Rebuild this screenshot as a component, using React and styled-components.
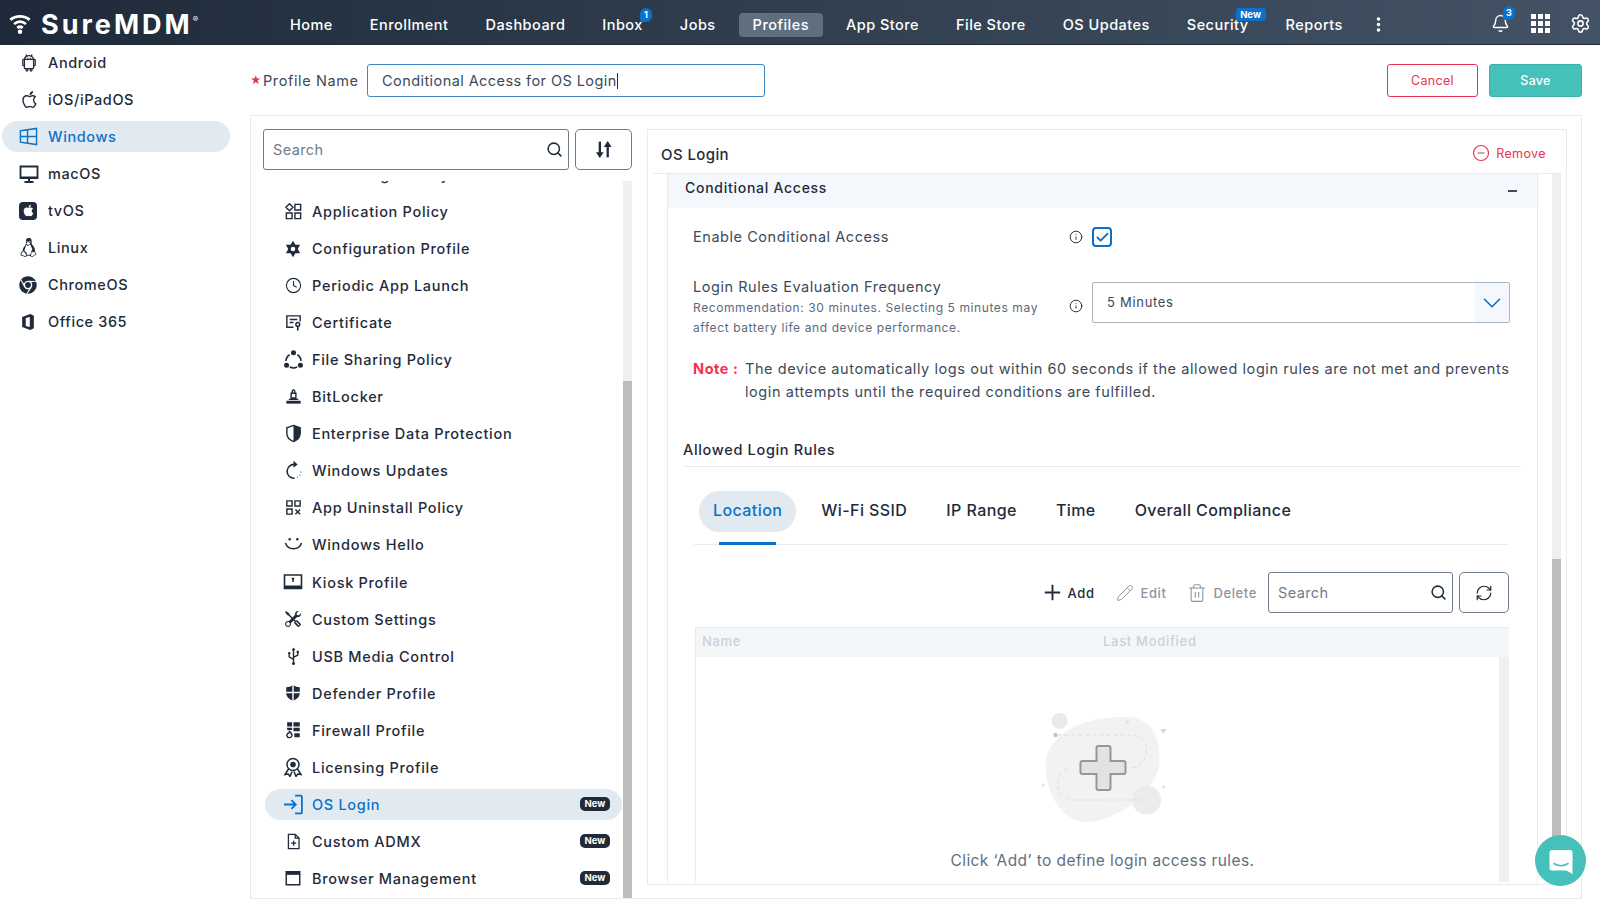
import React from 'react';
import styled, { createGlobalStyle } from 'styled-components';
import { Bell, Settings, EllipsisVertical, Search, RefreshCw, Pencil, Trash2, ChevronDown, CircleMinus, Info, Check, Clock } from 'lucide-react';
import { AiOutlineAndroid, AiOutlineApple } from 'react-icons/ai';
import { FaApple, FaChrome } from 'react-icons/fa';
import { VscTerminalLinux } from 'react-icons/vsc';
import { BsTools } from 'react-icons/bs';

//////////////////////////////////////////////////

const Glyph = styled.svg.attrs({ viewBox: '0 0 20 20' })`
  width: ${p => p.$size || 19}px;
  height: ${p => p.$size || 19}px;
  flex: none;
  fill: none;
  stroke: currentColor;
  stroke-width: 1.5;
`;

const SOLID = { fill: 'currentColor', stroke: 'none' };

const WifiLogo = () => (
  <LogoMark viewBox="0 0 24 24">
    <path d="M1.5 7.5C7.5 2.5 16.5 2.5 22.5 7.5" />
    <path d="M5.5 12C9.5 8.8 14.5 8.8 18.5 12" />
    <path d="M9 16.2C10.8 14.8 13.2 14.8 15 16.2" />
    <circle cx="12" cy="20.5" r="2.4" fill="#fff" stroke="none" />
  </LogoMark>
);

const sideIcons = {
  Android: <AiOutlineAndroid size={20} />,
  'iOS/iPadOS': <AiOutlineApple size={21} />,
  Windows: (
    <Glyph $size={19}>
      <path d="M1.5 4L18.5 1.5V18.5L1.5 16Z M1.5 10H18.5 M9 3V17" />
    </Glyph>
  ),
  macOS: (
    <Glyph $size={20}>
      <path d="M1.5 2.5H18.5V14H1.5Z" strokeWidth="1.8" />
      <path d="M1.5 12.5H18.5V14.5H1.5Z" {...SOLID} />
      <path d="M10 14V17.5 M5.5 18H14.5" strokeWidth="2" />
    </Glyph>
  ),
  tvOS: null,
  Linux: <VscTerminalLinux size={19} />,
  ChromeOS: <FaChrome size={18} />,
  'Office 365': (
    <Glyph $size={18}>
      <path d="M12.5 1L3.5 4.5V15.5L12.5 19L16.5 17V3ZM12 4.5V15.5L7.5 14.5V5.5Z" {...SOLID} fillRule="evenodd" />
    </Glyph>
  ),
};

const listIcons = {
  app: (
    <Glyph>
      <path d="M5.8 1.8L9.5 5.5L5.8 9.2L2 5.5Z M11.5 2.5H17.5V8.5H11.5Z M2.5 11.5H8.5V17.5H2.5Z M11.5 11.5H17.5V17.5H11.5Z" />
    </Glyph>
  ),
  config: (
    <Glyph $size={18}>
      <path d="M10 .8L12.7 5.2H17.9L15.3 10L17.9 14.8H12.7L10 19.2L7.3 14.8H2.1L4.7 10L2.1 5.2H7.3Z" {...SOLID} />
      <circle cx="10" cy="10" r="2.5" fill="#fff" stroke="none" />
    </Glyph>
  ),
  clock: <Clock size={17} strokeWidth={1.6} />,
  cert: (
    <Glyph>
      <path d="M17 9V3H3V15H10 M6 6.8H14 M6 10H10" />
      <circle cx="14.5" cy="12" r="2" />
      <path d="M14.5 14V18.5" strokeWidth="1.8" />
    </Glyph>
  ),
  share: (
    <Glyph $size={21}>
      <circle cx="10" cy="3.6" r="2.4" {...SOLID} />
      <circle cx="3.4" cy="15.5" r="2.4" {...SOLID} />
      <circle cx="16.6" cy="15.5" r="2.4" {...SOLID} />
      <path d="M6.3 5.5A7.5 7.5 0 0 0 2.8 11.5 M13.7 5.5A7.5 7.5 0 0 1 17.2 11.5 M6.5 17.2A8 8 0 0 0 13.5 17.2" />
    </Glyph>
  ),
  lock: (
    <Glyph>
      <path d="M7.5 6.5H12.5V11.5H7.5Z M8.7 6.5V4.5A1.3 1.3 0 0 1 11.3 4.5V6.5 M5 13H15" />
      <path d="M2.5 14.5H17.5V17.5H2.5Z" {...SOLID} />
    </Glyph>
  ),
  edp: (
    <Glyph>
      <path d="M10 1.5L17 4V10C17 14 14 16.9 10 18.5C6 16.9 3 14 3 10V4Z" />
      <path d="M10 1.5L17 4V10C17 14 14 16.9 10 18.5Z" {...SOLID} />
    </Glyph>
  ),
  update: (
    <Glyph $size={21}>
      <path d="M10.5 4.2A6.6 6.6 0 0 0 10.5 17.4" />
      <path d="M10.5 17.4A6.6 6.6 0 0 0 17 10.8" strokeDasharray="1 2" opacity=".55" />
      <path d="M10 .8L14 4.2L10 7.4Z" {...SOLID} />
    </Glyph>
  ),
  uninstall: (
    <Glyph>
      <path d="M3 3H8.5V8.5H3Z M11.5 3H17V8.5H11.5Z M3 11.5H8.5V17H3Z M12 12L17 17 M17 12L12 17" />
    </Glyph>
  ),
  hello: (
    <Glyph>
      <circle cx="6" cy="4.5" r="1.3" {...SOLID} />
      <circle cx="14" cy="4.5" r="1.3" {...SOLID} />
      <path d="M1.5 8.5A9 9 0 0 0 18.5 8.5" strokeWidth="1.6" />
    </Glyph>
  ),
  kiosk: (
    <Glyph $size={20}>
      <path d="M1.5 3H18.5V16.5H1.5Z" strokeWidth="1.6" />
      <path d="M1.5 13.5H18.5V17H1.5Z" {...SOLID} />
      <path d="M8.7 6.5H11.3 M10 6.5V10" strokeWidth="1.5" />
    </Glyph>
  ),
  tools: <BsTools size={16} />,
  usb: (
    <Glyph>
      <path d="M10 3V16.5 M10 13L5.5 10.3V7.5 M10 11L14.5 8.5V6" />
      <path d="M10 .5L12 3.5H8Z" {...SOLID} />
      <circle cx="10" cy="17.3" r="1.6" {...SOLID} />
      <circle cx="5.5" cy="6.5" r="1.3" {...SOLID} />
      <path d="M13.3 4H15.7V6.3H13.3Z" {...SOLID} />
    </Glyph>
  ),
  defender: (
    <Glyph $size={18}>
      <path d="M10 1.5C12.5 3 15 3.5 17.5 3.5V10C17.5 14 14.5 17 10 18.5C5.5 17 2.5 14 2.5 10V3.5C5 3.5 7.5 3 10 1.5Z" {...SOLID} />
      <path d="M10 1.5V18.5 M2.5 9.5H17.5" stroke="#fff" strokeWidth="1.6" />
    </Glyph>
  ),
  firewall: (
    <Glyph $size={18}>
      <path d="M3.5 1.5H9V6H3.5Z M10.5 1.5H17.5V6H10.5Z M10.5 7.5H17.5V11.5H10.5Z M3.5 7.5H9V10H3.5Z M11.5 13.5H17.5V18H11.5Z" {...SOLID} />
      <path d="M6 11.5C8.5 13.5 9.2 15 8.8 16.5A3 3 0 0 1 3 16C3 14.5 4 14.5 4.5 13.5C5.5 14 6 13 6 11.5Z" />
    </Glyph>
  ),
  license: (
    <Glyph $size={20}>
      <circle cx="10" cy="7.5" r="6" />
      <circle cx="10" cy="7.5" r="2.8" {...SOLID} />
      <path d="M5.5 12L2 17.5L5.3 17L7 19.5L9 14.5 M14.5 12L18 17.5L14.7 17L13 19.5L11 14.5" />
    </Glyph>
  ),
  login: (
    <Glyph $size={21}>
      <path d="M11.5 1.5H17A1 1 0 0 1 18 2.5V17.5A1 1 0 0 1 17 18.5H11.5" strokeWidth="1.7" />
      <path d="M1 10H12 M8 5.8L12.2 10L8 14.2" strokeWidth="1.7" />
    </Glyph>
  ),
  admx: (
    <Glyph $size={17}>
      <path d="M4 1.5H12L16.5 6V18.5H4Z M12 1.5V6H16.5 M10.2 9V15 M7.2 12H13.2" />
    </Glyph>
  ),
  browser: (
    <Glyph $size={18}>
      <path d="M2.5 3H17.5V17.5H2.5Z" strokeWidth="1.6" />
      <path d="M2.5 3H17.5V6.5H2.5Z" {...SOLID} />
    </Glyph>
  ),
};

const NAV = [
  { label: 'Home' },
  { label: 'Enrollment' },
  { label: 'Dashboard' },
  { label: 'Inbox', badge: '1' },
  { label: 'Jobs' },
  { label: 'Profiles', active: true },
  { label: 'App Store' },
  { label: 'File Store' },
  { label: 'OS Updates' },
  { label: 'Security', tag: 'New' },
  { label: 'Reports' },
];

const PLATFORMS = ['Android', 'iOS/iPadOS', 'Windows', 'macOS', 'tvOS', 'Linux', 'ChromeOS', 'Office 365'];

const POLICIES = [
  { label: 'Data Usage Policy' },
  { label: 'Application Policy', icon: 'app' },
  { label: 'Configuration Profile', icon: 'config' },
  { label: 'Periodic App Launch', icon: 'clock' },
  { label: 'Certificate', icon: 'cert' },
  { label: 'File Sharing Policy', icon: 'share' },
  { label: 'BitLocker', icon: 'lock' },
  { label: 'Enterprise Data Protection', icon: 'edp' },
  { label: 'Windows Updates', icon: 'update' },
  { label: 'App Uninstall Policy', icon: 'uninstall' },
  { label: 'Windows Hello', icon: 'hello' },
  { label: 'Kiosk Profile', icon: 'kiosk' },
  { label: 'Custom Settings', icon: 'tools' },
  { label: 'USB Media Control', icon: 'usb' },
  { label: 'Defender Profile', icon: 'defender' },
  { label: 'Firewall Profile', icon: 'firewall' },
  { label: 'Licensing Profile', icon: 'license' },
  { label: 'OS Login', icon: 'login', active: true, isNew: true },
  { label: 'Custom ADMX', icon: 'admx', isNew: true },
  { label: 'Browser Management', icon: 'browser', isNew: true },
];

const TABS = ['Location', 'Wi-Fi SSID', 'IP Range', 'Time', 'Overall Compliance'];

const App = () => (
  <Page>
    <GlobalStyle />
    <TopBar>
      <Logo>
        <WifiLogo />
        <LogoText>SureMDM<sup>®</sup></LogoText>
      </Logo>
      <Nav>
        {NAV.map(item => (
          <NavItem key={item.label} $active={item.active}>
            {item.label}
            {item.badge && <NavBadge>{item.badge}</NavBadge>}
            {item.tag && <NavTag>{item.tag}</NavTag>}
          </NavItem>
        ))}
        <MoreButton><EllipsisVertical size={19} strokeWidth={2.6} /></MoreButton>
      </Nav>
      <TopIcons>
        <TopIcon>
          <Bell size={19} strokeWidth={1.8} />
          <BellBadge>3</BellBadge>
        </TopIcon>
        <TopIcon>
          <AppGrid>{[...Array(9)].map((_, i) => <i key={i} />)}</AppGrid>
        </TopIcon>
        <TopIcon><Settings size={21} strokeWidth={1.8} /></TopIcon>
      </TopIcons>
    </TopBar>

    <Body>
      <Sidebar>
        {PLATFORMS.map(name => (
          <SideItem key={name} $active={name === 'Windows'}>
            <SideIcon>
              {name === 'tvOS' ? <TvBadge><FaApple size={13} /></TvBadge> : sideIcons[name]}
            </SideIcon>
            {name}
          </SideItem>
        ))}
      </Sidebar>

      <Main>
        <ProfileBar>
          <Required>★</Required>
          <NameLabel>Profile Name</NameLabel>
          <NameField>Conditional Access for OS Login</NameField>
          <CancelButton>Cancel</CancelButton>
          <SaveButton>Save</SaveButton>
        </ProfileBar>

        <Panel>
          <ListColumn>
            <SearchRow>
              <SearchBox>
                <SearchInput placeholder="Search" />
                <Search size={17} strokeWidth={2.2} />
              </SearchBox>
              <SquareButton $width={57}>
                <Glyph $size={21}>
                  <path d="M6.5 2.5V15" strokeWidth="2.2" />
                  <path d="M2.8 12.5H10.2L6.5 18Z" {...SOLID} />
                  <path d="M14 17.5V5" strokeWidth="2.2" />
                  <path d="M10.3 7.5H17.7L14 2Z" {...SOLID} />
                </Glyph>
              </SquareButton>
            </SearchRow>
            <ListWrap>
              <PolicyList>
                {POLICIES.map(p => (
                  <PolicyRow key={p.label} $active={p.active}>
                    <PolicyIcon>{listIcons[p.icon]}</PolicyIcon>
                    <PolicyName>{p.label}</PolicyName>
                    {p.isNew && <NewBadge>New</NewBadge>}
                  </PolicyRow>
                ))}
              </PolicyList>
              <ScrollTrack $width={9}>
                <ScrollThumb $top={200} />
              </ScrollTrack>
            </ListWrap>
          </ListColumn>

          <DetailCard>
            <CardHeader>
              <CardTitle>OS Login</CardTitle>
              <RemoveLink>
                <CircleMinus size={18} strokeWidth={1.6} />
                Remove
              </RemoveLink>
            </CardHeader>
            <CardBody>
              <Accordion>
                <AccordionHead>
                  <AccordionTitle>Conditional Access</AccordionTitle>
                  <Collapse />
                </AccordionHead>
                <AccordionContent>
                  <FormBlock>
                    <EnableRow>
                      <FieldLabel>Enable Conditional Access</FieldLabel>
                      <InfoIcon><Info size={16} strokeWidth={1.6} /></InfoIcon>
                      <CheckBox><Check size={15} strokeWidth={3} /></CheckBox>
                    </EnableRow>
                    <FrequencyRow>
                      <FieldText>
                        <FieldLabel>Login Rules Evaluation Frequency</FieldLabel>
                        <FieldHint>Recommendation: 30 minutes. Selecting 5 minutes may affect battery life and device performance.</FieldHint>
                      </FieldText>
                      <InfoIcon $offset={21}><Info size={16} strokeWidth={1.6} /></InfoIcon>
                      <SelectBox>
                        <SelectValue>5 Minutes</SelectValue>
                        <SelectArrow><ChevronDown size={30} strokeWidth={1.3} /></SelectArrow>
                      </SelectBox>
                    </FrequencyRow>
                    <NoteRow>
                      <NoteLabel>Note :</NoteLabel>
                      <NoteText>The device automatically logs out within 60 seconds if the allowed login rules are not met and prevents login attempts until the required conditions are fulfilled.</NoteText>
                    </NoteRow>
                  </FormBlock>

                  <SectionTitle>Allowed Login Rules</SectionTitle>

                  <RulesBlock>
                    <TabBar>
                      {TABS.map(tab => (
                        <Tab key={tab} $active={tab === 'Location'}>{tab}</Tab>
                      ))}
                    </TabBar>
                    <Toolbar>
                      <ActionButton>
                        <Glyph $size={17}><path d="M10 1V19 M1 10H19" strokeWidth="2.2" /></Glyph>
                        Add
                      </ActionButton>
                      <ActionButton $disabled><Pencil size={18} strokeWidth={1.3} />Edit</ActionButton>
                      <ActionButton $disabled><Trash2 size={20} strokeWidth={1.3} />Delete</ActionButton>
                      <SearchBox $width={185}>
                        <SearchInput placeholder="Search" />
                        <Search size={17} strokeWidth={2.2} />
                      </SearchBox>
                      <SquareButton $width={50}><RefreshCw size={18} strokeWidth={1.6} /></SquareButton>
                    </Toolbar>
                    <RulesTable>
                      <TableHead>
                        <HeadCell $width={401}>Name</HeadCell>
                        <HeadCell>Last Modified</HeadCell>
                      </TableHead>
                      <TableBody>
                        <EmptyState>
                          <EmptyArt viewBox="1031.5 710 140 120">
                            <path d="M1044 765C1044 738 1075 716 1125 717C1150 718 1158 735 1158 760C1158 790 1115 822 1085 822C1062 822 1044 795 1044 765Z" fill="#f2f2f2" />
                            <circle cx="1058" cy="721" r="8" fill="#eaeaea" />
                            <circle cx="1145" cy="800" r="14.5" fill="#ececec" />
                            <circle cx="1054" cy="735" r="2.2" fill="#c4c4c4" />
                            <circle cx="1126" cy="722" r="1.4" fill="#dcdcdc" />
                            <circle cx="1162" cy="787" r="1.4" fill="#dcdcdc" />
                            <path d="M1159 729H1165L1162 734Z" fill="#d6d6d6" />
                            <path d="M1043 783V787L1040 785Z" fill="#dcdcdc" />
                            <path d="M1056 735H1130C1150 735 1150 765 1130 768 M1066 769C1052 775 1052 798 1072 800H1143" fill="none" stroke="#dcdcdc" strokeWidth="1" strokeDasharray="4 3" />
                            <path d="M1097 746H1107A2 2 0 0 1 1109 748V761H1122A2 2 0 0 1 1124 763V772A2 2 0 0 1 1122 774H1109V788A2 2 0 0 1 1107 790H1097A2 2 0 0 1 1095 788V774H1081A2 2 0 0 1 1079 772V763A2 2 0 0 1 1081 761H1095V748A2 2 0 0 1 1097 746Z" fill="#e2e2e2" stroke="#969696" strokeWidth="2" />
                          </EmptyArt>
                          <EmptyText>Click ‘Add’ to define login access rules.</EmptyText>
                        </EmptyState>
                        <ScrollTrack $width={10} />
                      </TableBody>
                    </RulesTable>
                  </RulesBlock>
                </AccordionContent>
              </Accordion>
              <ScrollTrack $width={9}>
                <ScrollThumb $top={385} />
              </ScrollTrack>
            </CardBody>
          </DetailCard>
        </Panel>
      </Main>
    </Body>

    <ChatButton>
      <svg width="26" height="26" viewBox="0 0 26 26">
        <path d="M4 1H22A2.5 2.5 0 0 1 24.5 3.5V25L18.5 21.5H4A2.5 2.5 0 0 1 1.5 19V3.5A2.5 2.5 0 0 1 4 1Z" fill="#fff" />
        <path d="M6 14.5C10 17.5 16 17.5 20 14.5" fill="none" stroke="#45c0bb" strokeWidth="1.6" strokeLinecap="round" />
      </svg>
    </ChatButton>
  </Page>
);

//////////////////////////////////////////////////

const GlobalStyle = createGlobalStyle`
  html, body {
    margin: 0;
    padding: 0;
    background: #fff;
  }
  body {
    font-family: Inter, "Open Sans", "Liberation Sans", sans-serif;
    color: #1f2b3a;
  }
`;

const Page = styled.div`
  position: relative;
  width: 1600px;
  height: 900px;
  overflow: hidden;
  display: flex;
  flex-direction: column;
`;

const TopBar = styled.header`
  height: 45px;
  flex: none;
  display: flex;
  align-items: center;
  padding-top: 5px;
  background: linear-gradient(90deg, #1e2a39, #435365);
  border-bottom: 1px solid #1f2b3a;
  box-sizing: border-box;
  color: #fff;
`;

const Logo = styled.div`
  width: 276px;
  flex: none;
  display: flex;
  align-items: center;
  gap: 10px;
  padding-left: 9px;
  margin-top: -1px;
  box-sizing: border-box;
`;

const LogoMark = styled.svg`
  width: 22px;
  height: 22px;
  fill: none;
  stroke: #fff;
  stroke-width: 3;
`;

const LogoText = styled.div`
  font-size: 27px;
  font-weight: 700;
  letter-spacing: 3px;
  sup {
    font-size: 8px;
    font-weight: 400;
    letter-spacing: 0;
    vertical-align: 12px;
    line-height: 0;
  }
`;

const Nav = styled.nav`
  display: flex;
  align-items: center;
  gap: 9px;
`;

const NavItem = styled.a`
  position: relative;
  height: 24px;
  line-height: 24px;
  padding: 0 14px;
  border-radius: 4px;
  font-size: 14.5px;
  font-weight: 500;
  letter-spacing: 0.47px;
  white-space: nowrap;
  background: ${p => (p.$active ? '#5f6f80' : 'transparent')};
`;

const NavBadge = styled.span`
  position: absolute;
  top: -5px;
  right: 5px;
  width: 12px;
  height: 14px;
  border-radius: 6px 6px 6px 2px;
  background: #0a72c9;
  font-size: 9px;
  font-weight: 700;
  line-height: 14px;
  text-align: center;
  letter-spacing: 0;
`;

const NavTag = styled.span`
  position: absolute;
  top: -5px;
  right: -3px;
  width: 30px;
  height: 13px;
  border-radius: 3px;
  background: #0a72c9;
  font-size: 9.5px;
  font-weight: 700;
  line-height: 13px;
  text-align: center;
  letter-spacing: 0;
`;

const MoreButton = styled.span`
  display: flex;
  margin-left: 3px;
`;

const TopIcons = styled.div`
  margin-left: auto;
  margin-top: -2px;
  display: flex;
  align-items: center;
  gap: 20.5px;
  padding-right: 9px;
`;

const TopIcon = styled.span`
  position: relative;
  display: flex;
`;

const BellBadge = styled(NavBadge)`
  top: -8px;
  right: -5px;
`;

const AppGrid = styled.span`
  display: grid;
  grid-template-columns: repeat(3, 5px);
  gap: 2px;
  i {
    width: 5px;
    height: 5px;
    background: #fff;
  }
`;

const Body = styled.div`
  flex: 1;
  min-height: 0;
  display: flex;
`;

const Sidebar = styled.aside`
  width: 250px;
  flex: none;
  box-sizing: border-box;
  padding: 2px 0 0 2px;
  display: flex;
  flex-direction: column;
  gap: 6px;
`;

const SideItem = styled.div`
  width: 228px;
  height: 31px;
  display: flex;
  align-items: center;
  border-radius: 16px;
  font-size: 14.5px;
  font-weight: 500;
  letter-spacing: 0.6px;
  color: ${p => (p.$active ? '#0a72c9' : '#1f2b3a')};
  background: ${p => (p.$active ? '#e2eaf1' : 'transparent')};
`;

const SideIcon = styled.span`
  width: 46px;
  padding-left: 17px;
  box-sizing: border-box;
  flex: none;
  display: flex;
`;

const TvBadge = styled.span`
  width: 18px;
  height: 18px;
  border-radius: 4px;
  background: #1f2b3a;
  color: #fff;
  display: flex;
  align-items: center;
  justify-content: center;
`;

const Main = styled.main`
  flex: 1;
  min-width: 0;
  display: flex;
  flex-direction: column;
  padding-right: 18px;
  padding-bottom: 1px;
`;

const ProfileBar = styled.div`
  height: 70px;
  flex: none;
  box-sizing: border-box;
  padding-top: 19px;
  display: flex;
  align-items: flex-start;
`;

const Required = styled.span`
  color: #e8344e;
  width: 13px;
  font-size: 11px;
  line-height: 33px;
`;

const NameLabel = styled.label`
  width: 104px;
  font-size: 14.5px;
  letter-spacing: 0.6px;
  line-height: 33px;
  color: #3c4a5a;
`;

const NameField = styled.div`
  width: 398px;
  height: 33px;
  box-sizing: border-box;
  border: 1px solid #3f86c5;
  border-radius: 3px;
  padding-left: 14px;
  font-size: 14.5px;
  letter-spacing: 0.43px;
  line-height: 31px;
  color: #3c4a5a;
  &::after {
    content: '';
    display: inline-block;
    width: 1px;
    height: 16px;
    background: #1f2b3a;
    vertical-align: -3px;
  }
`;

const CancelButton = styled.button`
  margin-left: auto;
  width: 91px;
  height: 33px;
  background: #fff;
  border: 1px solid #e8344e;
  border-radius: 3px;
  color: #e8344e;
  font: 400 12.5px Inter, sans-serif;
  letter-spacing: 0.3px;
`;

const SaveButton = styled.button`
  margin-left: 11px;
  width: 93px;
  height: 33px;
  background: #45c0bb;
  border: 1px solid #3db1ac;
  border-radius: 3px;
  color: #fff;
  font: 500 12.5px Inter, sans-serif;
  letter-spacing: 0.3px;
`;

const Panel = styled.section`
  flex: 1;
  min-height: 0;
  display: flex;
  border: 1px solid #e6ecf2;
  padding: 13px 14px 13px 0;
`;

const ListColumn = styled.div`
  width: 396px;
  flex: none;
  box-sizing: border-box;
  padding: 0 15px 0 12px;
  display: flex;
  flex-direction: column;
  margin-bottom: -13px;
`;

const SearchRow = styled.div`
  display: flex;
  gap: 6px;
  flex: none;
`;

const SearchBox = styled.div`
  flex: ${p => (p.$width ? `0 0 ${p.$width}px` : '1')};
  min-width: 0;
  height: 41px;
  box-sizing: border-box;
  border: 1px solid #6f7c8a;
  border-radius: 3px;
  display: flex;
  align-items: center;
  padding: 0 5px 0 9px;
  color: #1f2b3a;
`;

const SearchInput = styled.input`
  flex: 1;
  width: 0;
  min-width: 0;
  border: 0;
  outline: 0;
  padding: 0;
  font: 400 14.5px Inter, sans-serif;
  letter-spacing: 0.4px;
  &::placeholder {
    color: #6f7c8a;
    opacity: 1;
  }
`;

const SquareButton = styled.button`
  width: ${p => p.$width}px;
  height: 41px;
  flex: none;
  padding: 0;
  display: flex;
  align-items: center;
  justify-content: center;
  background: #fff;
  border: 1px solid #6f7c8a;
  border-radius: 5px;
  color: #1f2b3a;
`;

const ListWrap = styled.div`
  flex: 1;
  min-height: 0;
  margin: 11px 0 0 2px;
  display: flex;
  overflow: hidden;
`;

const PolicyList = styled.div`
  flex: 1;
  min-width: 0;
  margin-top: -22px;
  display: flex;
  flex-direction: column;
  gap: 6.06px;
`;

const PolicyRow = styled.div`
  height: 31px;
  flex: none;
  display: flex;
  align-items: center;
  margin-right: 1px;
  padding: 0 12px 0 18px;
  border-radius: 16px;
  font-size: 14.5px;
  font-weight: 500;
  letter-spacing: 0.7px;
  color: ${p => (p.$active ? '#0a72c9' : '#1f2b3a')};
  background: ${p => (p.$active ? '#e2eaf1' : 'transparent')};
`;

const PolicyIcon = styled.span`
  width: 20px;
  margin-right: 9px;
  flex: none;
  display: flex;
  justify-content: center;
`;

const PolicyName = styled.span`
  flex: 1;
`;

const NewBadge = styled.span`
  width: 30px;
  height: 14px;
  border-radius: 5px;
  background: #1f2b3a;
  color: #fff;
  font-size: 9.5px;
  font-weight: 700;
  line-height: 14px;
  text-align: center;
  letter-spacing: 0;
`;

const ScrollTrack = styled.div`
  width: ${p => p.$width}px;
  flex: none;
  display: flex;
  flex-direction: column;
  background: #efefef;
`;

const ScrollThumb = styled.div`
  flex: 1;
  margin-top: ${p => p.$top}px;
  background: #bdbdbd;
`;

const DetailCard = styled.div`
  flex: 1;
  min-width: 0;
  display: flex;
  flex-direction: column;
  border: 1px solid #e6ecf2;
  box-sizing: border-box;
`;

const CardHeader = styled.div`
  height: 44px;
  flex: none;
  box-sizing: border-box;
  margin: 0 5px;
  padding: 0 15px 0 8px;
  display: flex;
  align-items: center;
  justify-content: space-between;
  border-bottom: 1px solid #e6ecf2;
`;

const CardTitle = styled.h2`
  margin: 6px 0 0;
  font-size: 15px;
  font-weight: 500;
  letter-spacing: 0.4px;
`;

const RemoveLink = styled.a`
  display: flex;
  align-items: center;
  gap: 6px;
  margin-top: 3px;
  font-size: 12.5px;
  letter-spacing: 0.4px;
  color: #e8344e;
`;

const CardBody = styled.div`
  flex: 1;
  min-height: 0;
  display: flex;
  padding: 0 5px 0 19px;
  gap: 14px;
`;

const Accordion = styled.div`
  flex: 1;
  min-width: 0;
  border-left: 1px solid #e6ecf2;
  border-right: 1px solid #e6ecf2;
  overflow: hidden;
`;

const AccordionHead = styled.div`
  height: 34px;
  box-sizing: border-box;
  display: flex;
  align-items: center;
  justify-content: space-between;
  padding: 0 20px 0 17px;
  background: #f4f8fc;
`;

const AccordionTitle = styled.span`
  margin-top: -7px;
  font-size: 14px;
  font-weight: 500;
  letter-spacing: 0.73px;
`;

const Collapse = styled.i`
  width: 9px;
  height: 2px;
  background: #3c4a5a;
`;

const AccordionContent = styled.div`
  padding: 0 16px 0 15px;
`;

const FormBlock = styled.div`
  padding: 19px 11px 0 10px;
`;

const EnableRow = styled.div`
  display: flex;
  align-items: center;
  height: 20px;
`;

const FieldLabel = styled.div`
  font-size: 14.5px;
  line-height: 18px;
  letter-spacing: 0.55px;
  color: #3c4a5a;
  width: 376px;
  flex: none;
`;

const InfoIcon = styled.span`
  width: 14px;
  flex: none;
  display: flex;
  justify-content: center;
  align-items: center;
  margin-right: 9px;
  margin-top: ${p => p.$offset || 0}px;
  height: 14px;
  color: #1f2b3a;
`;

const CheckBox = styled.span`
  width: 20px;
  height: 20px;
  box-sizing: border-box;
  border: 2px solid #0a72c9;
  border-radius: 4px;
  display: flex;
  align-items: center;
  justify-content: center;
  color: #0a72c9;
`;

const FrequencyRow = styled.div`
  display: flex;
  align-items: flex-start;
  margin-top: 31px;
`;

const FieldText = styled.div`
  width: 376px;
  flex: none;
`;

const FieldHint = styled.div`
  margin-top: 2px;
  width: 352px;
  font-size: 12px;
  line-height: 20px;
  letter-spacing: 0.6px;
  color: #5a6b7c;
`;

const SelectBox = styled.div`
  flex: 1;
  height: 41px;
  margin-top: 4px;
  box-sizing: border-box;
  border: 1px solid #aab4bf;
  border-radius: 2px;
  display: flex;
  align-items: center;
`;

const SelectValue = styled.span`
  flex: 1;
  padding-left: 14px;
  margin-top: -2px;
  font-size: 13px;
  letter-spacing: 0.7px;
  color: #3c4a5a;
`;

const SelectArrow = styled.span`
  width: 34px;
  height: 100%;
  display: flex;
  align-items: center;
  justify-content: center;
  background: #f4f8fc;
  color: #0a72c9;
`;

const NoteRow = styled.div`
  display: flex;
  margin: 19px -4px 0 0;
  font-size: 14.5px;
  line-height: 23px;
  letter-spacing: 0.58px;
  color: #3c4a5a;
`;

const NoteLabel = styled.span`
  width: 52px;
  flex: none;
  font-weight: 700;
  color: #f5304d;
`;

const NoteText = styled.p`
  margin: 0;
`;

const SectionTitle = styled.h3`
  margin: 38px 0 0;
  height: 26px;
  box-sizing: border-box;
  border-bottom: 1px solid #e6ecf2;
  font-size: 14.5px;
  font-weight: 500;
  letter-spacing: 0.67px;
`;

const RulesBlock = styled.div`
  margin: 24px 12px 0 11px;
`;

const TabBar = styled.div`
  height: 54px;
  box-sizing: border-box;
  padding-left: 5px;
  display: flex;
  align-items: flex-start;
  gap: 11px;
  border-bottom: 1px solid #e6ecf2;
`;

const Tab = styled.a`
  position: relative;
  height: 41px;
  line-height: 39px;
  padding: 0 14px;
  border-radius: 21px;
  font-size: 16px;
  font-weight: 500;
  letter-spacing: 0.42px;
  white-space: nowrap;
  color: ${p => (p.$active ? '#0a72c9' : '#1f2b3a')};
  background: ${p => (p.$active ? '#e2eaf1' : 'transparent')};
  &::after {
    content: '';
    display: ${p => (p.$active ? 'block' : 'none')};
    position: absolute;
    left: 20px;
    right: 20px;
    bottom: -13px;
    height: 3px;
    background: #0a72c9;
  }
`;

const Toolbar = styled.div`
  height: 41px;
  margin-top: 27px;
  display: flex;
  justify-content: flex-end;
  align-items: center;
  gap: 6px;
`;

const ActionButton = styled.span`
  display: flex;
  align-items: center;
  gap: 7px;
  margin-right: 15px;
  font-size: 13px;
  font-weight: 500;
  letter-spacing: 0.6px;
  color: ${p => (p.$disabled ? '#8b96a1' : '#1f2b3a')};
  &:nth-child(2) {
    margin-right: 14px;
  }
  &:nth-child(3) {
    margin-right: 5px;
  }
`;

const RulesTable = styled.div`
  height: 255px;
  margin: 14px 0 0 1px;
  display: flex;
  flex-direction: column;
  border-left: 1px solid #e6ecf2;
`;

const TableHead = styled.div`
  height: 30px;
  flex: none;
  display: flex;
  align-items: center;
  padding: 0 0 3px 6px;
  background: #f4f7f9;
  border-top: 1px solid #e9eff3;
  box-sizing: border-box;
`;

const HeadCell = styled.div`
  width: ${p => (p.$width ? `${p.$width}px` : 'auto')};
  font-size: 13px;
  font-weight: 500;
  letter-spacing: 0.7px;
  color: #cbd1d7;
`;

const TableBody = styled.div`
  flex: 1;
  min-height: 0;
  display: flex;
`;

const EmptyState = styled.div`
  flex: 1;
  padding: 53px 0 0 10px;
  display: flex;
  flex-direction: column;
  align-items: center;
`;

const EmptyArt = styled.svg`
  width: 140px;
  height: 120px;
  flex: none;
`;

const EmptyText = styled.p`
  margin: 20px 0 0;
  font-size: 15.5px;
  line-height: 22px;
  letter-spacing: 0.42px;
  color: #5e6f80;
  white-space: nowrap;
`;

const ChatButton = styled.button`
  position: absolute;
  left: 1535px;
  top: 835px;
  width: 51px;
  height: 51px;
  padding: 2px 0 0 1px;
  border: 0;
  border-radius: 50%;
  background: #45c0bb;
  display: flex;
  align-items: center;
  justify-content: center;
`;

//////////////////////////////////////////////////

export default App;
